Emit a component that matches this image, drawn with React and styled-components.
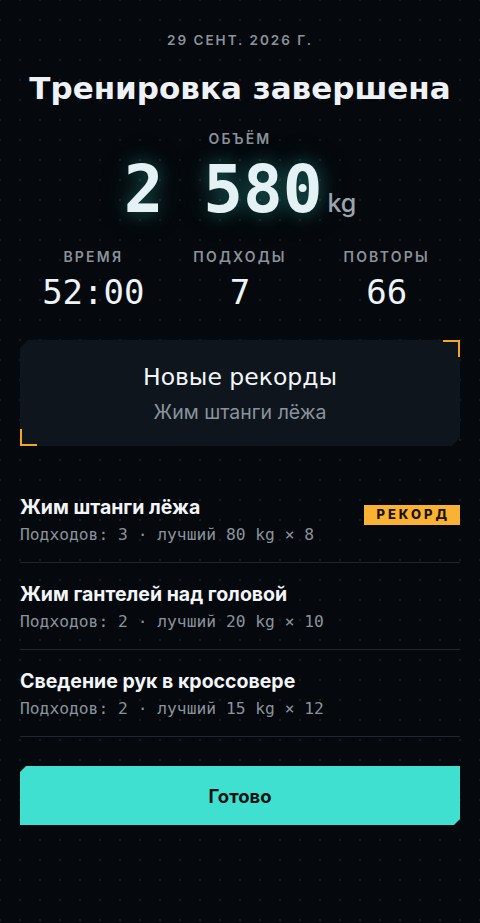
import styled, { createGlobalStyle } from "styled-components";

const GlobalStyle = createGlobalStyle`
  html, body {
    margin: 0;
    padding: 0;
    background: #05080c;
  }
  * {
    box-sizing: border-box;
  }
`;

const Page = styled.div`
  min-height: 923px;
  padding: 32px 20px 40px;
  background-color: #05080c;
  background-image: radial-gradient(circle at 1px 1px, #161c23 1px, transparent 1.6px);
  background-size: 20px 20px;
  background-position: -1px -1px;
  display: flex;
  flex-direction: column;
  font-family: Inter, "Noto Sans", sans-serif;
  color: #eef3f7;
`;

const DateLine = styled.div`
  text-align: center;
  font-size: 13.5px;
  line-height: 16px;
  font-weight: 600;
  letter-spacing: 2px;
  color: #8a929b;
`;

const Title = styled.h1`
  margin: 22px 0 0;
  text-align: center;
  font-family: "DejaVu Sans", sans-serif;
  font-size: 31px;
  line-height: 36px;
  font-weight: 700;
  color: #eef2f6;
`;

const Label = styled.div`
  text-align: center;
  font-size: 14px;
  line-height: 16px;
  font-weight: 600;
  letter-spacing: 2.2px;
  color: #8a929b;
`;

const VolumeBlock = styled.div`
  margin-top: 25px;
  display: flex;
  flex-direction: column;
  align-items: center;
`;

const BigNumber = styled.div`
  display: flex;
  align-items: baseline;
  margin-top: 7px;
  font-family: "DejaVu Sans Mono", monospace;
  font-size: 66px;
  line-height: 72px;
  font-weight: 700;
  color: #e4f2f6;
  text-shadow: 0 0 18px rgba(64, 224, 208, 0.35), 0 0 40px rgba(64, 224, 208, 0.15);
`;

const Unit = styled.span`
  margin-left: 5px;
  font-family: Inter, sans-serif;
  font-size: 25px;
  font-weight: 500;
  color: #9aa4ad;
  text-shadow: none;
`;

const Stats = styled.div`
  margin-top: 10px;
  display: grid;
  grid-template-columns: repeat(3, 1fr);
`;

const Stat = styled.div`
  display: flex;
  flex-direction: column;
  align-items: center;
  gap: 7px;
`;

const StatValue = styled.div`
  font-family: "DejaVu Sans Mono", monospace;
  font-size: 34px;
  line-height: 40px;
  font-weight: 500;
  color: #eef3f7;
`;

const RecordWrap = styled.div`
  position: relative;
  margin-top: 28px;
`;

const RecordCard = styled.div`
  height: 106px;
  background: #0e151c;
  clip-path: polygon(8px 0, 100% 0, 100% calc(100% - 8px), calc(100% - 8px) 100%, 0 100%, 0 8px);
  display: flex;
  flex-direction: column;
  align-items: center;
  justify-content: center;
  gap: 9px;
`;

const Bracket = styled.span`
  position: absolute;
  width: 17px;
  height: 17px;
  border-color: #f5a623;
  border-style: solid;
  border-width: 0;
  ${(p) =>
    p.$pos === "tr"
      ? "top: 0; right: 0; border-top-width: 2px; border-right-width: 2px;"
      : "bottom: 0; left: 0; border-bottom-width: 2px; border-left-width: 2px;"}
`;

const RecordTitle = styled.div`
  font-family: "DejaVu Sans", sans-serif;
  font-size: 23.5px;
  line-height: 28px;
  color: #f2f5f8;
`;

const RecordSub = styled.div`
  font-size: 19.5px;
  line-height: 24px;
  color: #8a939c;
`;

const List = styled.div`
  margin-top: 50px;
  display: flex;
  flex-direction: column;
`;

const Row = styled.div`
  display: flex;
  align-items: flex-start;
  justify-content: space-between;
  padding: 0 0 16px;
  margin-bottom: 20px;
  border-bottom: 1px solid #1f2630;
`;

const RowInfo = styled.div`
  display: flex;
  flex-direction: column;
  gap: 6px;
`;

const RowTitle = styled.div`
  font-size: 19.5px;
  line-height: 22px;
  font-weight: 700;
  color: #f2f5f8;
`;

const RowSub = styled.div`
  font-family: "DejaVu Sans Mono", monospace;
  font-size: 16.3px;
  line-height: 22px;
  color: #8a939c;
`;

const Badge = styled.span`
  margin-top: 9px;
  padding: 2px 10px 3px 12px;
  background: #f9b233;
  color: #1a1206;
  font-size: 13px;
  line-height: 15px;
  font-weight: 800;
  letter-spacing: 3px;
`;

const DoneButton = styled.button`
  margin-top: 9px;
  height: 59px;
  width: 100%;
  border: none;
  background: #40e0d0;
  color: #08110f;
  font-family: Inter, sans-serif;
  font-size: 18.5px;
  font-weight: 700;
  cursor: pointer;
  clip-path: polygon(6px 0, 100% 0, 100% calc(100% - 6px), calc(100% - 6px) 100%, 0 100%, 0 6px);
`;

const exercises = [
  { name: "Жим штанги лёжа", sets: 3, best: "80 kg × 8", record: true },
  { name: "Жим гантелей над головой", sets: 2, best: "20 kg × 10" },
  { name: "Сведение рук в кроссовере", sets: 2, best: "15 kg × 12" },
];

const App = () => {
  return (
    <>
      <GlobalStyle />
      <Page>
        <DateLine>29 СЕНТ. 2026 Г.</DateLine>
        <Title>Тренировка завершена</Title>
        <VolumeBlock>
          <Label>ОБЪЁМ</Label>
          <BigNumber>
            2 580<Unit>kg</Unit>
          </BigNumber>
        </VolumeBlock>
        <Stats>
          <Stat>
            <Label>ВРЕМЯ</Label>
            <StatValue>52:00</StatValue>
          </Stat>
          <Stat>
            <Label>ПОДХОДЫ</Label>
            <StatValue>7</StatValue>
          </Stat>
          <Stat>
            <Label>ПОВТОРЫ</Label>
            <StatValue>66</StatValue>
          </Stat>
        </Stats>
        <RecordWrap>
          <RecordCard>
            <RecordTitle>Новые рекорды</RecordTitle>
            <RecordSub>Жим штанги лёжа</RecordSub>
          </RecordCard>
          <Bracket $pos="tr" />
          <Bracket $pos="bl" />
        </RecordWrap>
        <List>
          {exercises.map((ex) => (
            <Row key={ex.name}>
              <RowInfo>
                <RowTitle>{ex.name}</RowTitle>
                <RowSub>
                  Подходов: {ex.sets} · лучший {ex.best}
                </RowSub>
              </RowInfo>
              {ex.record && <Badge>РЕКОРД</Badge>}
            </Row>
          ))}
        </List>
        <DoneButton>Готово</DoneButton>
      </Page>
    </>
  );
};

export default App;
